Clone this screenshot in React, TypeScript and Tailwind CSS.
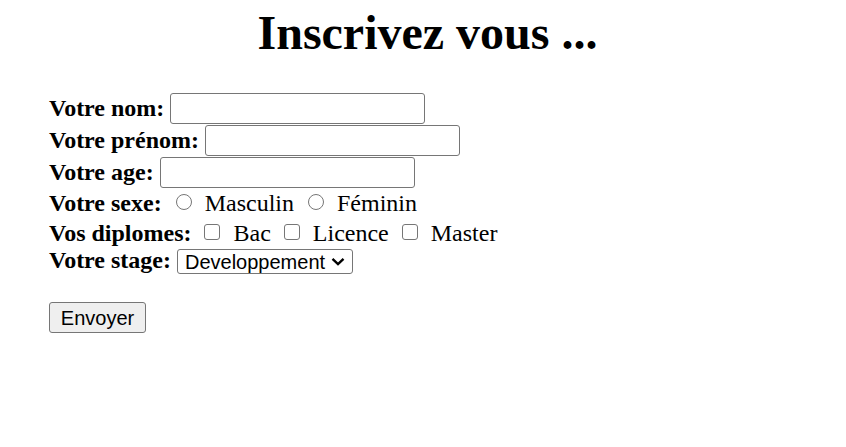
import { useState } from 'react'

const serif = 'font-["Liberation_Serif","Times_New_Roman",serif]'
const sans = 'font-["Liberation_Sans",Arial,sans-serif]'

function Radio({ checked, onClick }: { checked: boolean; onClick: () => void }): JSX.Element {
  return (
    <span
      onClick={onClick}
      className="ml-[14px] mb-[2px] flex h-[16px] w-[16px] shrink-0 items-center justify-center rounded-full border-[1.5px] border-[#767676] bg-white"
    >
      {checked && <span className="h-[8px] w-[8px] rounded-full bg-[#0075ff]" />}
    </span>
  )
}

function Checkbox({ checked, onClick }: { checked: boolean; onClick: () => void }): JSX.Element {
  return (
    <span
      onClick={onClick}
      className={`ml-[13px] mt-[6px] h-[16px] w-[16px] shrink-0 rounded-[3px] border-[1.5px] ${
        checked ? 'border-[#0075ff] bg-[#0075ff]' : 'border-[#767676] bg-white'
      }`}
    />
  )
}

function TextInput(): JSX.Element {
  return (
    <input
      type="text"
      className={`ml-[6px] h-[31px] w-[255px] rounded-[3px] border border-[#767676] bg-white px-[3px] text-[20px] outline-none ${sans}`}
    />
  )
}

function App(): JSX.Element {
  const [sexe, setSexe] = useState('')
  const [diplomes, setDiplomes] = useState<string[]>([])

  const toggle = (d: string): void => {
    setDiplomes((prev) => (prev.includes(d) ? prev.filter((x) => x !== d) : [...prev, d]))
  }

  return (
    <main className={`min-h-screen w-full bg-white pt-[5px] text-black ${serif}`}>
      <h1 className="mb-[32px] pl-[9px] text-center text-[48px] font-bold leading-[55px]">
        Inscrivez vous ...
      </h1>

      <form className="pl-[49px] text-[24px]" onSubmit={(e) => e.preventDefault()}>
        <div className="flex h-[32px] items-center">
          <span className="font-bold leading-[28px]">Votre nom:</span>
          <TextInput />
        </div>
        <div className="flex h-[32px] items-center">
          <span className="font-bold leading-[28px]">Votre prénom:</span>
          <TextInput />
        </div>
        <div className="flex h-[32px] items-center">
          <span className="font-bold leading-[28px]">Votre age:</span>
          <TextInput />
        </div>

        <div className="flex h-[30px] items-center">
          <span className="font-bold leading-[28px]">Votre sexe:</span>
          <Radio checked={sexe === 'M'} onClick={() => setSexe('M')} />
          <span className="ml-[13px] leading-[28px]">Masculin</span>
          <Radio checked={sexe === 'F'} onClick={() => setSexe('F')} />
          <span className="ml-[13px] leading-[28px]">Féminin</span>
        </div>

        <div className="flex h-[28px] items-start">
          <span className="mt-[1px] font-bold leading-[28px]">Vos diplomes:</span>
          <Checkbox checked={diplomes.includes('bac')} onClick={() => toggle('bac')} />
          <span className="ml-[13px] mt-[1px] leading-[28px]">Bac</span>
          <Checkbox checked={diplomes.includes('licence')} onClick={() => toggle('licence')} />
          <span className="ml-[13px] mt-[1px] leading-[28px]">Licence</span>
          <Checkbox checked={diplomes.includes('master')} onClick={() => toggle('master')} />
          <span className="ml-[13px] mt-[1px] leading-[28px]">Master</span>
        </div>

        <div className="flex h-[28px] items-start">
          <span className="font-bold leading-[28px]">Votre stage:</span>
          <div
            className={`ml-[6px] mt-[3px] flex h-[25px] w-[176px] items-center justify-between rounded-[3px] border border-[#767676] bg-white pl-[7px] pr-[7px] text-[20px] leading-none ${sans}`}
          >
            <span>Developpement</span>
            <svg width="14" height="9" viewBox="0 0 14 9" fill="none">
              <path d="M1.5 1.8 L7 7 L12.5 1.8" stroke="#000" strokeWidth="2.4" />
            </svg>
          </div>
        </div>

        <div className="h-[28px]" />

        <button
          type="submit"
          className={`flex h-[31px] w-[97px] items-center justify-center rounded-[3px] border border-[#767676] bg-[#efefef] text-[20px] ${sans}`}
        >
          Envoyer
        </button>
      </form>
    </main>
  )
}

export default App
